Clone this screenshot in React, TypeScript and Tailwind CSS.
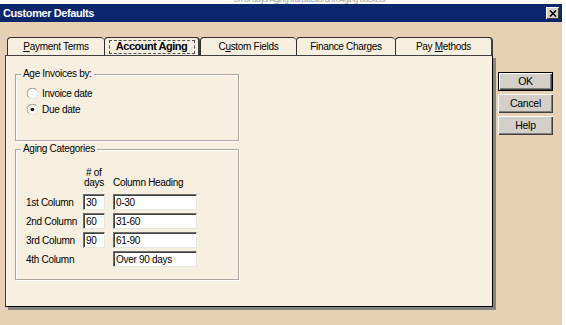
import React from "react";

const FONT = "font-['Liberation_Sans',Arial,sans-serif]";

function Radio({ checked, label }: { checked?: boolean; label: string }) {
  return (
    <div className="flex h-[16px] items-center">
      <svg width="11" height="11" viewBox="0 0 12 12" className="ml-[11px] mr-[4px]">
        <circle cx="6" cy="6" r="5.5" fill="#fff" />
        <path d="M10.2 1.8 A5.5 5.5 0 0 0 1.8 10.2" fill="none" stroke="#808080" strokeWidth="1" />
        <path d="M1.8 10.2 A5.5 5.5 0 0 0 10.2 1.8" fill="none" stroke="#e0ddd6" strokeWidth="1" />
        {checked && <circle cx="6" cy="6" r="2" fill="#000" />}
      </svg>
      <span>{label}</span>
    </div>
  );
}

function Field({ value, w }: { value: string; w: string }) {
  return (
    <div
      className={`${w} flex h-[16px] items-center border-t border-l border-b border-r border-t-[#6f6f6f] border-l-[#6f6f6f] border-b-[#e8e6e0] border-r-[#e8e6e0] bg-white pl-[2px] shadow-[inset_1px_1px_0_#404040]`}
    >
      {value}
    </div>
  );
}

function Btn({ label, def }: { label: string; def?: boolean }) {
  return (
    <div
      className={`flex h-[19px] w-[55px] items-center justify-center bg-[#d4d0c8] text-[10.5px] ${
        def
          ? "border border-black shadow-[inset_1px_1px_0_#fff,inset_-1px_-1px_0_#404040,inset_-2px_-2px_0_#808080]"
          : "shadow-[inset_1px_1px_0_#fff,inset_-1px_-1px_0_#404040,inset_-2px_-2px_0_#808080]"
      }`}
    >
      {label}
    </div>
  );
}

const tabs = [
  { w: "w-[97px]", label: <><u>P</u>ayment Terms</> },
  { w: "w-[96px]", label: <>Account Aging</>, active: true },
  { w: "w-[96px]", label: <>C<u>u</u>stom Fields</> },
  { w: "w-[99px]", label: <>Finance Char<u>g</u>es</> },
  { w: "w-[98px]", label: <>Pay <u>M</u>ethods</>, last: true },
];

const rows = [
  { label: "1st Column", days: "30", head: "0-30" },
  { label: "2nd Column", days: "60", head: "31-60" },
  { label: "3rd Column", days: "90", head: "61-90" },
  { label: "4th Column", days: null, head: "Over 90 days" },
];

export default function App() {
  return (
    <div className={`h-[325px] w-[566px] overflow-hidden bg-white ${FONT} text-[10px] tracking-[-0.3px] text-black`}>
      {/* clipped text of the page behind the dialog */}
      <div className="h-[4px] overflow-hidden">
        <div className="-mt-[5px] pl-[234px] text-[8px] leading-[9px] text-[#a0a0a0]">
          on of days Aging transactions in Aging buckets
        </div>
      </div>

      <div className="flex h-[321px] w-[562px] flex-col bg-[#e8d0b4]">
        {/* title bar */}
        <div className="flex h-[18px] items-center justify-between bg-[#0b266c] pl-[3px] pr-[3px]">
          <span className="text-[11px] font-bold tracking-[-0.4px] text-white">Customer Defaults</span>
          <div className="flex h-[12px] w-[13px] items-center justify-center bg-[#d4d0c8] shadow-[inset_1px_1px_0_#fff,inset_-1px_-1px_0_#404040]">
            <svg width="8" height="7" viewBox="0 0 8 7">
              <path d="M1 0.5 L7 6.5 M7 0.5 L1 6.5" stroke="#000" strokeWidth="1.6" />
            </svg>
          </div>
        </div>

        <div className="flex pl-[5px] pt-[15px]">
          <div className="flex w-[492px] flex-col">
            {/* tabs */}
            <div className="flex h-[18px] pl-[2px]">
              {tabs.map((t, i) => (
                <div
                  key={i}
                  className={`${t.w} flex items-center justify-center rounded-t-[4px] border-t border-l border-[#303030] bg-[#f7efdf] ${
                    t.active ? "border-r-2 border-r-[#404040]" : ""
                  } ${t.last ? "border-r-2 border-r-[#404040]" : ""}`}
                >
                  {t.active ? (
                    <span className="flex h-[14px] w-[86px] items-center justify-center border border-dashed border-[#505050] text-[11px] font-bold tracking-[-0.5px]">
                      {t.label}
                    </span>
                  ) : (
                    <span>{t.label}</span>
                  )}
                </div>
              ))}
            </div>

            {/* panel */}
            <div className="h-[252px] w-[488px] border border-[#404040] border-r-black border-b-black bg-[#f7efdf] pl-[9px] pt-[12px] shadow-[3px_3px_0_#858585]">
              <fieldset className="h-[73px] w-[224px] border border-[#a9a6a0] shadow-[1px_1px_0_#fff,inset_1px_1px_0_#fff]">
                <legend className="ml-[5px] px-[2px] leading-[12px]">Age Invoices by:</legend>
                <div className="pt-[5px]">
                  <Radio label="Invoice date" />
                  <Radio label="Due date" checked />
                </div>
              </fieldset>

              <fieldset className="mt-[2px] h-[137px] w-[224px] border border-[#a9a6a0] shadow-[1px_1px_0_#fff,inset_1px_1px_0_#fff]">
                <legend className="ml-[5px] px-[2px] leading-[12px]">Aging Categories</legend>
                <div className="grid grid-cols-[49px_22px_84px] gap-x-[8px] gap-y-[3px] pl-[10px] pt-[13px]">
                  <div />
                  <div className="mb-[3px] pl-[1px] leading-[10px]">
                    <div className="pl-[2px]"># of</div>
                    <div>days</div>
                  </div>
                  <div className="mb-[3px] self-end whitespace-nowrap leading-[10px]">Column Heading</div>

                  {rows.map((r) => (
                    <React.Fragment key={r.label}>
                      <div className="flex items-center whitespace-nowrap">{r.label}</div>
                      {r.days ? <Field value={r.days} w="w-[22px]" /> : <div />}
                      <Field value={r.head} w="w-[84px]" />
                    </React.Fragment>
                  ))}
                </div>
              </fieldset>
            </div>
          </div>

          {/* buttons */}
          <div className="ml-[1px] mt-[35px] flex flex-col gap-[3px]">
            <Btn label="OK" def />
            <Btn label="Cancel" />
            <Btn label="Help" />
          </div>
        </div>
      </div>
    </div>
  );
}
